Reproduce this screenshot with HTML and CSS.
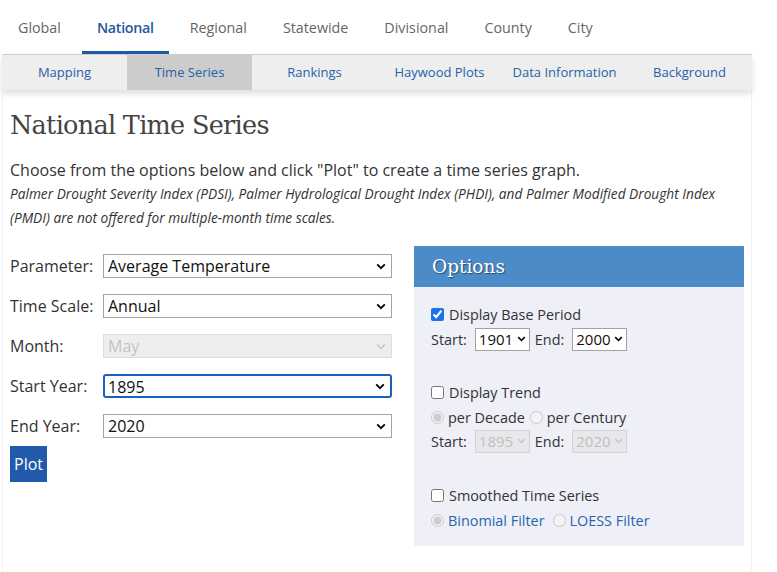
FILE: index.html
```html
<!DOCTYPE html>
<html lang="en">
<head>
<meta charset="utf-8">
<title>National Time Series</title>
<link rel="stylesheet" href="styles.css">
</head>
<body>
<div class="page">
  <nav class="tabs">
    <a class="tab">Global</a>
    <a class="tab active">National</a>
    <a class="tab">Regional</a>
    <a class="tab">Statewide</a>
    <a class="tab">Divisional</a>
    <a class="tab">County</a>
    <a class="tab">City</a>
  </nav>
  <nav class="subnav">
    <a class="sub">Mapping</a>
    <a class="sub active">Time Series</a>
    <a class="sub">Rankings</a>
    <a class="sub">Haywood Plots</a>
    <a class="sub">Data Information</a>
    <a class="sub">Background</a>
  </nav>
  <main class="content">
    <h1 class="title">National Time Series</h1>
    <p class="intro">Choose from the options below and click "Plot" to create a time series graph.</p>
    <p class="note">Palmer Drought Severity Index (PDSI), Palmer Hydrological Drought Index (PHDI), and Palmer Modified Drought Index (PMDI) are not offered for multiple-month time scales.</p>
    <div class="columns">
      <form class="params">
        <div class="row"><label class="lbl">Parameter:</label><select class="sel"><option>Average Temperature</option></select></div>
        <div class="row"><label class="lbl">Time Scale:</label><select class="sel"><option>Annual</option></select></div>
        <div class="row"><label class="lbl">Month:</label><select class="sel" disabled><option>May</option></select></div>
        <div class="row"><label class="lbl">Start Year:</label><select class="sel focus"><option>1895</option></select></div>
        <div class="row"><label class="lbl">End Year:</label><select class="sel"><option>2020</option></select></div>
        <button type="button" class="plot">Plot</button>
      </form>
      <section class="options">
        <h2 class="opt-head">Options</h2>
        <div class="opt-body">
          <div class="group">
            <label class="line l25"><input type="checkbox" class="cb" checked><span>Display Base Period</span></label>
            <div class="line l24"><span class="k">Start:</span><select class="mini"><option>1901</option></select><span class="k end">End:</span><select class="mini"><option>2000</option></select></div>
          </div>
          <div class="group g2">
            <label class="line l25"><input type="checkbox" class="cb"><span>Display Trend</span></label>
            <div class="line l24"><input type="radio" class="rd" name="t" checked disabled><span>per Decade</span><input type="radio" class="rd r2" name="t" disabled><span>per Century</span></div>
            <div class="line l24"><span class="k">Start:</span><select class="mini" disabled><option>1895</option></select><span class="k end">End:</span><select class="mini" disabled><option>2020</option></select></div>
          </div>
          <div class="group g3">
            <label class="line l25"><input type="checkbox" class="cb"><span>Smoothed Time Series</span></label>
            <div class="line l24 blue"><input type="radio" class="rd" name="s" checked disabled><span>Binomial Filter</span><input type="radio" class="rd r3" name="s" disabled><span>LOESS Filter</span></div>
          </div>
        </div>
      </section>
    </div>
  </main>
</div>
</body>
</html>
```
FILE: styles.css
```css
html, body {
  margin: 0;
  padding: 0;
  background: #fff;
}
body {
  font-family: "Open Sans", "Liberation Sans", sans-serif;
  color: #333;
}
.page {
  width: 750px;
  margin-left: 2px;
}
.tabs {
  display: flex;
  gap: 6px;
  height: 54px;
  padding-left: 1px;
  border-bottom: 1px solid #cfcfcf;
}
.tab {
  display: flex;
  align-items: center;
  padding: 0 15px;
  font-size: 14.3px;
  color: #666;
  border-bottom: 3px solid transparent;
  padding-top: 3px;
  box-sizing: border-box;
}
.tab.active {
  color: #1f5a9c;
  font-weight: 600;
  letter-spacing: -0.3px;
  border-bottom-color: #1f5aa6;
}
.subnav {
  display: grid;
  grid-template-columns: repeat(6, 125px);
  height: 35px;
  background: #eeeeee;
  box-shadow: 0 4px 6px rgba(0, 0, 0, 0.12);
  position: relative;
}
.sub {
  display: flex;
  align-items: center;
  justify-content: center;
  padding-bottom: 1px;
  font-size: 13px;
  color: #2562a8;
}
.sub.active {
  background: #cccccc;
}
.content {
  border-left: 1px solid #f3f3f3;
  border-right: 1px solid #f3f3f3;
  padding: 18px 7px 26px;
}
.title {
  margin: 0;
  font-family: "DejaVu Serif", serif;
  font-weight: normal;
  font-size: 25.5px;
  line-height: 34px;
  color: #444;
  letter-spacing: -0.7px;
}
.intro {
  margin: 16px 0 0;
  font-size: 16px;
  line-height: 24px;
  color: #333;
}
.note {
  margin: 0;
  font-size: 13.7px;
  font-style: italic;
  line-height: 24px;
  color: #333;
}
.columns {
  display: flex;
  gap: 22px;
  margin-top: 16px;
}
.params {
  width: 382px;
}
.row {
  display: flex;
  align-items: center;
  height: 40px;
}
.lbl {
  width: 93px;
  font-size: 16px;
  color: #333;
}
.sel {
  appearance: none;
  -webkit-appearance: none;
  width: 289px;
  height: 24px;
  box-sizing: border-box;
  border: 1px solid #a3a3a3;
  border-radius: 0;
  padding: 0 4px;
  font-family: "Open Sans", "Liberation Sans", sans-serif;
  font-size: 16px;
  color: #111;
  background: #fff url("data:image/svg+xml;utf8,<svg xmlns='http://www.w3.org/2000/svg' width='10' height='7' viewBox='0 0 10 7'><path d='M1.2 1.4 L5 5.2 L8.8 1.4' fill='none' stroke='%23000' stroke-width='1.8'/></svg>") no-repeat right 5px center;
}
.sel:disabled {
  background-color: #e8e8e8;
  border-color: #cfcfcf;
  color: #a8a8a8;
  background-image: url("data:image/svg+xml;utf8,<svg xmlns='http://www.w3.org/2000/svg' width='10' height='7' viewBox='0 0 10 7'><path d='M1.2 1.4 L5 5.2 L8.8 1.4' fill='none' stroke='%23aaa' stroke-width='1.4'/></svg>");
}
.sel.focus {
  border: 2px solid #1a5fc4;
  border-radius: 3px;
  padding: 0 3px;
}
.plot {
  display: block;
  width: 37px;
  height: 36px;
  border: none;
  border-radius: 0;
  padding: 0;
  background: #2159ab;
  color: #fff;
  font-family: "Open Sans", "Liberation Sans", sans-serif;
  font-size: 16px;
}
.options {
  width: 330px;
  background: #eeeff7;
  align-self: flex-start;
}
.opt-head {
  margin: 0;
  height: 41px;
  display: flex;
  align-items: center;
  padding-left: 18px;
  background: #4b8bc8;
  color: #fff;
  font-family: "DejaVu Serif", serif;
  font-weight: normal;
  font-size: 18.5px;
  text-shadow: 1px 1px 1px rgba(0, 0, 0, 0.45);
}
.opt-body {
  padding: 15px 17px 14px;
  font-size: 14.4px;
  color: #333;
}
.g2 { margin-top: 29px; }
.g3 { margin-top: 30px; }
.line {
  display: flex;
  align-items: center;
}
.l25 { height: 25px; }
.l24 { height: 24px; }
.cb {
  margin: 0 5px 0 0;
  width: 13px;
  height: 13px;
  accent-color: #1a73e8;
}
.rd {
  margin: 0 4px 0 0;
  width: 13px;
  height: 13px;
}
.r2 { margin-left: 5px; }
.r3 { margin-left: 8px; }
.blue { color: #2a66ad; }
.k { margin-right: 8px; }
.k.end { margin-left: 5px; }
.mini {
  appearance: none;
  -webkit-appearance: none;
  width: 55px;
  height: 23px;
  box-sizing: border-box;
  border: 1px solid #a3a3a3;
  border-radius: 0;
  padding: 0 3px;
  font-family: "Open Sans", "Liberation Sans", sans-serif;
  font-size: 15px;
  color: #111;
  background: #fff url("data:image/svg+xml;utf8,<svg xmlns='http://www.w3.org/2000/svg' width='9' height='6' viewBox='0 0 10 7'><path d='M1.2 1.4 L5 5.2 L8.8 1.4' fill='none' stroke='%23000' stroke-width='1.9'/></svg>") no-repeat right 3px center;
}
.mini:disabled {
  background-color: #e6e6e6;
  border-color: #c8c8c8;
  color: #aaa;
  background-image: url("data:image/svg+xml;utf8,<svg xmlns='http://www.w3.org/2000/svg' width='9' height='6' viewBox='0 0 10 7'><path d='M1.2 1.4 L5 5.2 L8.8 1.4' fill='none' stroke='%23aaa' stroke-width='1.4'/></svg>");
}
```
